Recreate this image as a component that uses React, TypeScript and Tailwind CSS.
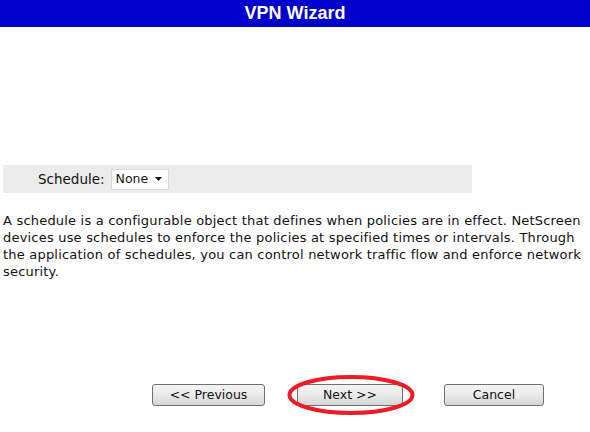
import React from 'react';

const bodyFont = { fontFamily: '"DejaVu Sans", Verdana, sans-serif' };

const WizardButton: React.FC<{ label: string; className?: string }> = ({ label, className }) => (
  <button
    className={`block h-[22px] rounded-[3px] border border-[#707070] bg-gradient-to-b from-[#f4f4f4] via-[#ebebeb] to-[#d6d6d6] text-[12.5px] leading-none text-[#111] ${className ?? ''}`}
    style={bodyFont}
  >
    {label}
  </button>
);

export default function App() {
  return (
    <div className="w-[590px] h-[432px] bg-white flex flex-col overflow-hidden">
      <div
        className="h-[27px] shrink-0 bg-[#0000cc] text-white font-bold text-[18px] leading-[27px] text-center"
        style={{ fontFamily: '"Liberation Sans", Arial, sans-serif' }}
      >
        VPN Wizard
      </div>

      <div className="mt-[138px] ml-[3px] w-[469px] h-[28px] shrink-0 bg-[#ececec] flex items-center pl-[35px] gap-[6px]">
        <span className="text-[13.5px] text-[#111]" style={bodyFont}>
          Schedule:
        </span>
        <div className="h-[21px] w-[58px] bg-white border border-[#d8d8d8] flex items-center justify-between pl-[4px] pr-[6px]">
          <span className="text-[12.5px] text-[#111]" style={bodyFont}>
            None
          </span>
          <svg width="7" height="4" viewBox="0 0 7 4">
            <path d="M0 0h7L3.5 4z" fill="#111" />
          </svg>
        </div>
      </div>

      <div className="mt-[19px] ml-[3px] w-[586px] h-[68px] shrink-0">
        <p className="text-[13px] leading-[17px] text-[#111] tracking-[0.2px] whitespace-nowrap" style={bodyFont}>
          A schedule is a configurable object that defines when policies are in effect. NetScreen
          <br />
          devices use schedules to enforce the policies at specified times or intervals. Through
          <br />
          the application of schedules, you can control network traffic flow and enforce network
          <br />
          security.
        </p>
      </div>

      <div className="mt-[104px] flex items-start shrink-0">
        <WizardButton label="<< Previous" className="ml-[152px] w-[113px]" />
        <div className="relative ml-[32px] flex">
          <WizardButton label="Next >>" className="w-[106px]" />
          <svg
            className="absolute left-[-10px] top-[-9px] pointer-events-none"
            width="128"
            height="40"
            viewBox="0 0 128 40"
          >
            <ellipse cx="64" cy="20" rx="61.5" ry="18" fill="none" stroke="#ed1c24" strokeWidth="4" />
          </svg>
        </div>
        <WizardButton label="Cancel" className="ml-[41px] w-[100px]" />
      </div>
    </div>
  );
}
